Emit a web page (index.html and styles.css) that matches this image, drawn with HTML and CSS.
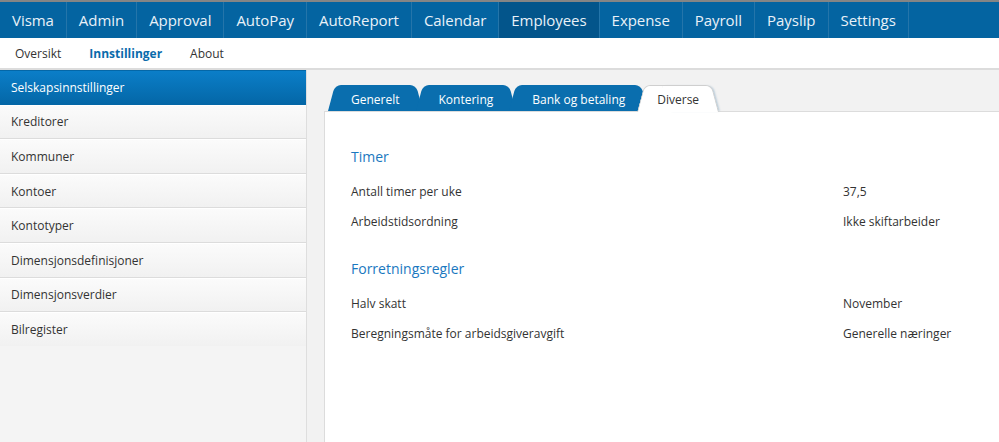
FILE: index.html
```html
<!DOCTYPE html>
<html>
<head>
  <meta charset=utf-8>
  <title>Innstillinger</title>
  <link rel="stylesheet" href="styles.css">
</head>
<body>

<div class=topnav>
  <a>Visma</a><a>Admin</a><a>Approval</a><a>AutoPay</a><a>AutoReport</a><a>Calendar</a><a class=active>Employees</a><a>Expense</a><a>Payroll</a><a>Payslip</a><a>Settings</a>
</div>

<div class=subnav>
  <a>Oversikt</a><a class=active>Innstillinger</a><a>About</a>
</div>

<div class=main>
  <div class=sidebar>
    <a class=active>Selskapsinnstillinger</a>
    <a>Kreditorer</a>
    <a>Kommuner</a>
    <a>Kontoer</a>
    <a>Kontotyper</a>
    <a>Dimensjonsdefinisjoner</a>
    <a>Dimensjonsverdier</a>
    <a>Bilregister</a>
  </div>

  <div class=content>
    <div class=tabs>
      <span class=tab>Generelt</span>
      <span class=tab>Kontering</span>
      <span class=tab>Bank og betaling</span>
      <span class='tab current'>Diverse</span>
    </div>
    <div class=panel>
      <h3>Timer</h3>
      <div class=row><span>Antall timer per uke</span><span>37,5</span></div>
      <div class=row><span>Arbeidstidsordning</span><span>Ikke skiftarbeider</span></div>
      <h3 class=next>Forretningsregler</h3>
      <div class=row><span>Halv skatt</span><span>November</span></div>
      <div class=row><span>Beregningsmåte for arbeidsgiveravgift</span><span>Generelle næringer</span></div>
    </div>
  </div>
</div>

</body>
</html>
```

FILE: styles.css
```css
* {
  box-sizing: border-box;
  }
html, body {
  height: 100%;
  }
body {
  margin: 0;
  font-family: "Open Sans", "DejaVu Sans", sans-serif;
  color: #333;
  display: flex;
  flex-direction: column;
  overflow: hidden;
  }
a {
  cursor: pointer;
  }

/* top menu */
.topnav {
  display: flex;
  height: 38px;
  border-top: 2px solid #858585;
  background-color: #0464a1;
  }
.topnav a {
  display: flex;
  align-items: center;
  padding: 0 12px 1px 12px;
  font-size: 15px;
  letter-spacing: -0.05px;
  color: #e9f1f8;
  border-right: 1px solid #2475aa;
  }
.topnav a.active {
  background-color: #03558b;
  }

/* second menu */
.subnav {
  display: flex;
  height: 32px;
  padding-left: 1px;
  border-bottom: 2px solid #dcdcdc;
  }
.subnav a {
  display: flex;
  align-items: center;
  padding: 0 14px;
  font-size: 12px;
  color: #333;
  }
.subnav a.active {
  font-weight: bold;
  color: #0a6bab;
  }

.main {
  flex: 1;
  display: flex;
  }

/* left menu */
.sidebar {
  width: 307px;
  background-color: #f4f4f4;
  border-right: 1px solid #dedede;
  }
.sidebar a {
  display: flex;
  align-items: center;
  height: 34.6px;
  padding-left: 11px;
  font-size: 12px;
  color: #333;
  background: linear-gradient(#fbfbfb, #f1f1f1);
  border-top: 1px solid #fff;
  border-bottom: 1px solid #dcdcdc;
  }
.sidebar a:last-child {
  border-bottom-color: #f4f4f4;
  }
.sidebar a.active {
  color: #fff;
  background: linear-gradient(#0b7ec8, #0467a7);
  border-color: #0467a7;
  }

.content {
  flex: 1;
  display: flex;
  flex-direction: column;
  padding: 15px 0 0 17px;
  background-color: #f2f2f2;
  }

/* tabs */
.tabs {
  display: flex;
  height: 26px;
  padding-left: 4px;
  }
.tab {
  position: relative;
  z-index: 0;
  display: flex;
  align-items: center;
  padding: 3px 23px 0;
  margin-right: -7px;
  font-size: 12px;
  color: #fff;
  }
.tab::before, .tab::after {
  content: '';
  position: absolute;
  z-index: -1;
  top: 0;
  bottom: 0;
  width: 60%;
  background-color: #0a6eae;
  }
.tab::before {
  left: 0;
  border-radius: 6px 0 0 0;
  transform: skewX(-15deg);
  transform-origin: bottom left;
  }
.tab::after {
  right: 0;
  border-radius: 0 6px 0 0;
  transform: skewX(15deg);
  transform-origin: bottom right;
  }
.tab.current {
  z-index: 2;
  color: #333;
  padding: 3px 20px 0;
  margin-left: -4px;
  }
.tab.current::before, .tab.current::after {
  background-color: #fff;
  border: 1px solid #cfcfcf;
  border-bottom: 0;
  bottom: -1px;
  }
.tab.current::before {
  border-right: 0;
  }
.tab.current::after {
  border-left: 0;
  box-shadow: 2px 0 2px -1px #b9cbd8;
  }

/* panel */
.panel {
  position: relative;
  z-index: 1;
  flex: 1;
  padding: 35px 26px 0;
  background-color: #fff;
  border-top: 1px solid #dcdcdc;
  border-left: 1px solid #dcdcdc;
  }
.panel h3 {
  margin: 0 0 10px;
  font-size: 14px;
  line-height: 19px;
  font-weight: normal;
  color: #1a78bf;
  }
.panel h3.next {
  margin-top: 23px;
  }
.row {
  display: grid;
  grid-template-columns: 492px 1fr;
  height: 30px;
  align-items: center;
  font-size: 12px;
  }
```
